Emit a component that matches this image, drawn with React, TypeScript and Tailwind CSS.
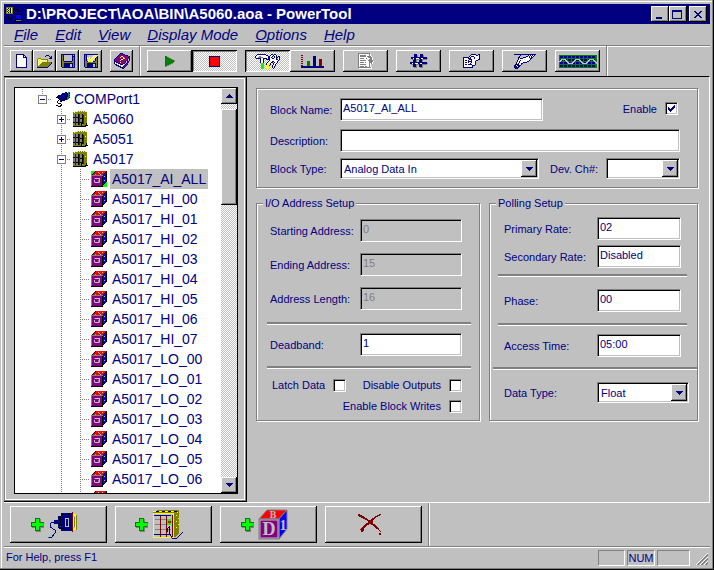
import { useState } from "react";
import type { ReactNode } from "react";
import clsx from "clsx";

const COLORS: Record<string, string> = {
  k: "#000000",
  n: "#000080",
  w: "#ffffff",
  g: "#808080",
  s: "#c0c0c0",
  y: "#ffff00",
  o: "#808000",
  r: "#ff0000",
  m: "#800000",
  p: "#800080",
  b: "#0000ff",
  l: "#00ff00",
  e: "#008000",
  t: "#008080",
};

const RAISED =
  "bg-[#c0c0c0] shadow-[inset_-1px_-1px_#000,inset_1px_1px_#fff,inset_-2px_-2px_#808080]";
const PRESSED =
  "bg-[repeating-conic-gradient(#fff_0_25%,#c0c0c0_0_50%)] bg-[length:2px_2px] shadow-[inset_1px_1px_#000,inset_-1px_-1px_#fff,inset_2px_2px_#808080]";
const SUNKEN =
  "border border-t-[#808080] border-l-[#808080] border-r-white border-b-white shadow-[inset_1px_1px_#000,inset_-1px_-1px_#c0c0c0]";
const ETCHED =
  "border border-[#808080] shadow-[1px_1px_#fff,inset_1px_1px_#fff]";

// One character per pixel, "." is transparent
function Pixels({ rows }: { rows: string[] }) {
  const width = Math.max(...rows.map((r) => r.length));
  return (
    <svg
      width={width}
      height={rows.length}
      shapeRendering="crispEdges"
      className="shrink-0"
      aria-hidden="true"
    >
      {rows.flatMap((row, y) =>
        [...row].map((c, x) =>
          COLORS[c] ? (
            <rect key={`${x}-${y}`} x={x} y={y} width={1} height={1} fill={COLORS[c]} />
          ) : null,
        ),
      )}
    </svg>
  );
}

const NEW_ICON = [
  "nnnnnnnn...",
  "nwwwwwwnn..",
  "nwwwwwwnwn.",
  "nwwwwwwnnnn",
  "nwwwwwwwwwn",
  "nwwwwwwwwwn",
  "nwwwwwwwwwn",
  "nwwwwwwwwwn",
  "nwwwwwwwwwn",
  "nwwwwwwwwwn",
  "nwwwwwwwwwn",
  "nwwwwwwwwwn",
  "nwwwwwwwwwn",
  "nnnnnnnnnnn",
];

const OPEN_ICON = [
  ".........nnn...",
  "........n...n.n",
  ".............nn",
  ".ooo........nnn",
  "oywyooooooo....",
  "owywywywywo....",
  "oywywywywyo....",
  "owywyooooooooon",
  "oywyoooooooooon",
  "owyoooooooooon.",
  "oyoooooooooon..",
  "ooooooooooon...",
  "nnnnnnnnnnn....",
];

const SAVE_ICON = [
  "nnnnnnnnnnnnnn",
  "nonssssssssnsn",
  "nonssssssssnnn",
  "nonssssssssnon",
  "nonssssssssnon",
  "nonssssssssnon",
  "nonssssssssnon",
  "noonnnnnnnnoon",
  "noooooooooooon",
  "noonnnnnnnnnon",
  "noonnnnnnssnon",
  "noonnnnnnssnon",
  "noonnnnnnssnon",
  ".nnnnnnnnnnnnn",
];

const SAVE_AS_ICON = [
  "nnnnnnnnnnnnnn",
  "nonssssssswyyw",
  "nonsssssswyywn",
  "nonyswsswyywnn",
  "nonwywswyywnon",
  "nonsyywyywsnon",
  "nonswyyywssnon",
  "noonyyyywnnoon",
  "noooooooooooon",
  "noonnnnnnnnnon",
  "noonnnnnnssnon",
  "noonnnnnnssnon",
  "noonnnnnnssnon",
  ".nnnnnnnnnnnnn",
];

const BOOK_ICON = [
  "......nnn.......",
  ".....npppnn.....",
  "....npppppppnn..",
  "...npppyyppppppn",
  "..npppyppyppppnn",
  ".npppppppyyppppn",
  "nppppppyyppppnsn",
  "npppppyppppppnsn",
  "nnpppppppppnsnn.",
  "nwnnppyppppnsnp.",
  "nwswnnpppnnsnp..",
  ".nnwswnnnwsnpn..",
  "..nnnwswwsnpn...",
  "....nnnwsnpn....",
  "......nnnpn.....",
  "........nn......",
];

const PLAY_ICON = [
  "ee........",
  "eeeg......",
  "eeeeeg....",
  "eeeeeeeg..",
  "eeeeeeeeeg",
  "eeeeeeeeeg",
  "eeeeeeeeg.",
  "eeeeeegg..",
  "eeeegg....",
  "eegg......",
  "gg........",
];

const LIST_ICON = [
  "gggggggggggg....",
  "gwwwwwwwwwwgw...",
  "gwggggggwwwgw...",
  "gwggggggwggggw..",
  "gwwwwwwwwwggggw.",
  "gwggggwwgwwwggw.",
  "gwwwwwwwwwwgggw.",
  "gwggggggwwggggg.",
  "gwwwwwwwwwwggggw",
  "gwggggwgwwwgggw.",
  "gwwwwwwwwwwgwgw.",
  "gwggggggwwwgw...",
  "gwwwwwwwwwwgw...",
  "gwggggwggwwgw...",
  "gggggggggggggw..",
  ".wwwwwwwwwwwww..",
];

const GRID_ICON = [
  "....nnn...nnn.....",
  "....nnng..nnng....",
  "....nnng..nnng....",
  ".nnnnnnnnnnnnnnnn.",
  ".nnwnnwwwnnwwnnnng",
  "..ggnnggggnnggggg.",
  "...nnng..nnng.....",
  "...nnng..nnng.....",
  "nnnnnnnnnnnnnnnnn.",
  "nnwnnwwwnnwwnnnnng",
  ".ggnnngggnnnggggg.",
  "...nnng..nnng.....",
  "...nnng..nnng.....",
  "....ggg...ggg.....",
];

const PROPERTIES_ICON = [
  "........nnnnn..nn",
  ".......nwwwwwnnwn",
  "......nwnnnwwwwwn",
  "nnnnnnwnwwwnwwwwn",
  "nwwwwnnnwwwnwwwwn",
  "nwwwwwnnnwwwwwwnn",
  "nwnnwnwwnwwwwnn..",
  "nwwwwnnnnwwwn....",
  "nwnnwnwwnwwwn....",
  "nwwwwwwnwwwwn....",
  "nwnnwnnnnwwwn....",
  "nwwwwwwwwnnn.....",
  "nwwwwwwwwn.......",
  "nnnnnnnnnn.......",
];

const HAND_ICON = [
  "nnnnnnnnnnnnnnnnnnnnnn",
  "......n.......nwnwnwn.",
  ".....n......nnwnwnwn..",
  "....nn...nnnwwwnwnn...",
  "....nwnnnwwwwwwwnn....",
  "....nwwwwwwwwwwwn.....",
  "...nwwnwwwwwwwwn......",
  "...nwnwwwwwwwnn.......",
  "..nwwnwwwnnnn.........",
  "..nwnwwnn.............",
  ".nnnnwwn..............",
  "nnwnnnn...............",
  "nnnwnn................",
  "nnnnn.................",
  ".nnn..................",
];

const TOOLS_ICON = [
  "..nnnnnnnnn.....nn.nn....",
  ".nwwwwwwwwwnn..nwwnwwn...",
  "nwwwggwwwwwwwnnwwn.nwn.nn",
  "nwwgggggwwwwwnnwn..nwnnwn",
  ".nnnnnwwnnnnwnnwwnnwwn.wn",
  ".....nwwn..nnnnwwwwwwnnwn",
  ".....nwwn.....nwwwwwwwwn.",
  ".....nwwn....nwwwnnwwwn..",
  ".....nwwn...nwwwnn.nwwn..",
  "......lll..nyywn..nwwn...",
  "......lll..nyyyn..nwn....",
  "......lll..yyyn..nwwn....",
  "......lll..yyy...nwn.....",
  "......lll..yyy...nwn.....",
  "......lll..yyy....n......",
];

const CHART_ICON = [
  "mm.....................",
  "............nnn........",
  "mm..........nnn........",
  "............nnn........",
  "mm..........nnn...mmm..",
  "............nnn...mmm..",
  "mm....eee...nnn...mmm..",
  "......eee...nnn...mmm..",
  "mm....eee...nnn...mmm..",
  "......eee...nnn...mmm..",
  "mm....eee...nnn...mmm..",
  "nnnnnnnnnnnnnnnnnnnnnnn",
  "nnnnnnnnnnnnnnnnnnnnnnn",
];

const PORT_ICON = [
  ".........kk.tt",
  "......nnnnnktk",
  ".....nnnnnnktt",
  "..kknnbnnnnktk",
  ".knnnnnbnnnktt",
  "kknnnnnnnnkttk",
  "..knnnnnnnktt.",
  "...nnnnnnkkt..",
  "..k.nnnkk.....",
  ".k..kk........",
  ".k............",
  "..kkk.........",
  ".....k........",
  "kk..kk........",
  "..kkk.........",
];

const DEVICE_ICON = [
  "..y.yoyoyoyoy..",
  "oyoooooooooooo.",
  "oogooogooooooo.",
  "ogmggkmggkoooo.",
  "ogmggkmggkmooo.",
  "ogmggkmggkmoyo.",
  "kkmkkkmggkmooo.",
  "ogmggkmkkkmooo.",
  "ogmggkmggkmooo.",
  "ogmggkmggkmooo.",
  "ogmggkmggkmooo.",
  "kkmkkkmkkkmooo.",
  "ogmggkmgkkmook.",
  "ogmggkmgkgoook.",
  "ooooooookoookkk",
  "kkkkkkkkkkkkk..",
];

const BLOCK_ICON = [
  "....krrrrrrrrrrk",
  "...krrrsrrrsrrkk",
  "..krrrrrsrrrrkbk",
  ".krrsrrrrsrrkbbk",
  "ggggggggggggbbbk",
  "gppppppppppkbsbk",
  "gppppppppppkbbbk",
  "gppgsssssppkbbbk",
  "gpppppppsppkbbbk",
  "gppspppgsppkbsbk",
  "gppspppgsppkbbbk",
  "gppgssssgppkbbk.",
  "gppppppppppkbk..",
  "gppppppppppkk...",
  "gppppppppppk....",
  "kkkkkkkkkkkk....",
];

const ACTIVE_BLOCK_ICON = BLOCK_ICON.map((row) => row.replace(/\./g, "l"));

const PLUS_ICON = [
  "....eeeee....",
  "....ellleg...",
  "....ellleg...",
  "....ellleg...",
  "eeeeellleeeee",
  "elllllllllllg",
  "elllllllllllg",
  "elllllllllllg",
  "eeeeellleeeeg",
  ".gggelllegggg",
  "....ellleg...",
  "....ellleg...",
  "....eeeeeg...",
  ".....ggggg...",
];

const APP_ICON = [
  "ooooooo.........",
  "oykykyo..k......",
  "okyokyo.kkkk....",
  "oykykyo..k..k...",
  "okyokyo.....k...",
  "oykykyo.........",
  "ooooooo.........",
  ".........kkkkkkk",
  ".........kbbbbbk",
  "..k......kbbbbbk",
  "..k......kbbbbbk",
  "..kkk....kbbbbbk",
  "....k....kkkkkkk",
  "..........ggggg.",
  "........kkkkkkkk",
];

const DELETE_ICON = [
  "mm...................mm",
  "mmmm...............mmm.",
  ".mmmmm...........mmm...",
  "...mmmm.........mm.....",
  ".....mmmm.....mmm......",
  ".......mmm...mmm.......",
  ".........mmmmmm........",
  "..........mmmmm........",
  "..........mmmmm........",
  "........mmmmmmm........",
  ".......mmmm..mmmm......",
  "......mmm......mmm.....",
  ".....mmm........mmm....",
  "....mmm..........mmm...",
  "...mmm............mmm..",
  "..mmmm..............m..",
  "...mmm...............m.",
  "...mm.................m",
  ".......................",
  ".....................mm",
  ".....................mm",
];

function StopIcon() {
  return (
    <svg width="11" height="11" shapeRendering="crispEdges" aria-hidden="true">
      <rect width="11" height="11" fill="#000080" />
      <rect x="1" y="1" width="9" height="9" fill="#f00" />
    </svg>
  );
}

function WaveIcon() {
  return (
    <svg width="38" height="13" shapeRendering="crispEdges" aria-hidden="true">
      <rect width="38" height="13" fill="#008000" />
      <g fill="#000080">
        {[1, 4, 7, 10].map((y) =>
          [1, 5, 9, 13, 17, 21, 25, 29, 33].map((x) => (
            <rect key={`${x}-${y}`} x={x} y={y} width="3" height="2" />
          )),
        )}
      </g>
      <path
        d="M0 6.5h1l2-2h3l2 2 2 2h3l2-2 2-2h3l2 2 2 2h3l2-2 2-2h3l2 2 2 2"
        fill="none"
        stroke="#c0c0c0"
        strokeWidth="1"
      />
    </svg>
  );
}

function SerialPortIcon() {
  return (
    <svg width="30" height="28" shapeRendering="crispEdges" aria-hidden="true">
      <path
        d="M8 11H4l-2 2v3l5 3v3l-3 4H1"
        fill="none"
        stroke="#000080"
        strokeWidth="1"
      />
      <path d="M6 9h4V5h3V2h11v18H13v-3h-3v-4H6z" fill="#000080" />
      <path d="M11 5h2v13h-2z" fill="#000" />
      <rect x="17" y="7" width="3" height="8" fill="none" stroke="#c0c0c0" />
      <path d="M24 1h1v20h-1z" fill="#800000" />
      <path d="M25 3h3v2h-3zM27 5h1v12h-1zM25 17h3v2h-3z" fill="#ffff00" />
      <path d="M25 6h1v10h-1z" fill="#fff" />
      <path d="M26 6h1v10h-1zM28 4h1v15h-1z" fill="#808000" />
      <path d="M14 3h2v1h-2zM14 17h2v1h-2zM20 2h1v2h-1z" fill="#000" />
      <path d="M12 15h1v1h-1zM0 26h1v1H0z" fill="#008080" />
    </svg>
  );
}

function RackIcon() {
  return (
    <svg width="32" height="30" shapeRendering="crispEdges" aria-hidden="true">
      <path d="M1 2l5-2h21v23l-4 4H1z" fill="#808000" />
      <path d="M1 1h3v1H1zM7 1h3v1H7zM13 1h3v1h-3zM19 1h3v1h-3z" fill="#ffff00" />
      <path d="M4 1h3v1H4zM10 1h3v1h-3zM16 1h3v1h-3zM22 1h3v1h-3z" fill="#000" />
      <rect x="1" y="3" width="20" height="24" fill="#c0c0c0" />
      <path d="M1 3h20v24H1z" fill="none" stroke="#ffff00" strokeWidth="1" />
      <path d="M3 9h16M3 14h16M3 19h16" stroke="#808080" />
      <path d="M8 5v22M14 5v22M20 5v22" stroke="#800000" />
      <path d="M2 5.5h17M2 24h17" stroke="#000080" />
      <rect x="15" y="9" width="4" height="6" fill="#00ff00" />
      <path d="M16 11h3v2h-3z" fill="#f00" />
      <path
        d="M24 5h1v1h-1zM26 8h1v1h-1zM24 11h1v1h-1zM26 14h1v1h-1zM24 17h1v1h-1zM25 2h1v1h-1z"
        fill="#ffff00"
      />
      <path d="M15 22v-3l2-2v6l3 5h5l6-6" fill="none" stroke="#000080" />
    </svg>
  );
}

function BigBlockIcon() {
  return (
    <svg width="31" height="31" aria-hidden="true">
      <path d="M1 10L9 1h20l-8 9z" fill="#f00" stroke="#808080" />
      <path d="M21 10l8-9v19l-8 10z" fill="#00f" stroke="#808080" />
      <rect x="1" y="10" width="20" height="20" fill="#800080" stroke="#808080" />
      <rect x="2" y="11" width="18" height="18" fill="none" stroke="#c0c0c0" />
      <text
        x="11"
        y="26"
        textAnchor="middle"
        fill="#c0c0c0"
        className="font-['Liberation_Serif',serif] text-[18px] font-bold"
      >
        D
      </text>
      <text
        x="15"
        y="9"
        textAnchor="middle"
        fill="#c0c0c0"
        className="font-['Liberation_Serif',serif] text-[10px] font-bold"
      >
        B
      </text>
      <text
        x="25"
        y="21"
        textAnchor="middle"
        fill="#c0c0c0"
        className="font-['Liberation_Serif',serif] text-[14px] font-bold"
      >
        1
      </text>
    </svg>
  );
}

function ToolButton({
  label,
  small,
  pressed,
  disabled,
  onClick,
  children,
}: {
  label: string;
  small?: boolean;
  pressed?: boolean;
  disabled?: boolean;
  onClick?: () => void;
  children: ReactNode;
}) {
  return (
    <button
      type="button"
      aria-label={label}
      aria-pressed={pressed}
      disabled={disabled}
      onClick={onClick}
      className={clsx(
        "flex h-[22px] shrink-0 items-center justify-center",
        small ? "w-[23px]" : "w-[45px]",
        pressed ? PRESSED : RAISED,
      )}
    >
      {children}
    </button>
  );
}

function Divider() {
  return <div className="mx-1.5 w-0.5 self-stretch border-l border-[#808080] bg-white" />;
}

function TitleBar() {
  return (
    <header className="flex h-5 shrink-0 items-center bg-[#000080] pr-[3px] pl-0.5 text-white">
      <Pixels rows={APP_ICON} />
      <h1 className="ml-1 flex-1 truncate text-[15px] leading-5 font-bold">
        D:\PROJECT\AOA\BIN\A5060.aoa - PowerTool
      </h1>
      <button aria-label="Minimize" className={clsx("flex h-4 w-[18px] items-end pb-[3px] pl-[5px]", RAISED)}>
        <span className="h-0.5 w-1.5 bg-[#000080]" />
      </button>
      <button aria-label="Maximize" className={clsx("flex h-4 w-[18px] items-center pl-[3px]", RAISED)}>
        <span className="h-[9px] w-2.5 border border-t-2 border-[#000080]" />
      </button>
      <button
        aria-label="Close"
        className={clsx("ml-0.5 flex h-4 w-[18px] items-center justify-center", RAISED)}
      >
        <Pixels
          rows={["nn....nn", ".nn..nn.", "..nnnn..", "...nn...", "..nnnn..", ".nn..nn.", "nn....nn"]}
        />
      </button>
    </header>
  );
}

const MENUS = ["File", "Edit", "View", "Display Mode", "Options", "Help"];

function MenuBar() {
  return (
    <nav className="flex h-[21px] shrink-0 gap-[17px] pl-2.5 text-[15px] leading-5 italic">
      {MENUS.map((name) => (
        <button key={name} type="button">
          <span className="underline">{name[0]}</span>
          {name.slice(1)}
        </button>
      ))}
    </nav>
  );
}

function Toolbar() {
  const [running, setRunning] = useState(false);
  const [view, setView] = useState("config");

  return (
    <div className="flex shrink-0 items-center border-t border-[#808080] pl-1.5 shadow-[inset_0_1px_#fff]">
      <div className="flex py-1">
        <ToolButton small label="New">
          <Pixels rows={NEW_ICON} />
        </ToolButton>
        <ToolButton small label="Open">
          <Pixels rows={OPEN_ICON} />
        </ToolButton>
        <ToolButton small label="Save">
          <Pixels rows={SAVE_ICON} />
        </ToolButton>
        <ToolButton small label="Save As">
          <Pixels rows={SAVE_AS_ICON} />
        </ToolButton>
      </div>
      <div className="ml-2 flex">
        <ToolButton small label="Help Topics">
          <Pixels rows={BOOK_ICON} />
        </ToolButton>
      </div>
      <Divider />
      <div className="flex gap-2">
        <div className="flex">
          <ToolButton label="Run" pressed={running} onClick={() => setRunning(true)}>
            <Pixels rows={PLAY_ICON} />
          </ToolButton>
          <ToolButton label="Stop" pressed={!running} onClick={() => setRunning(false)}>
            <StopIcon />
          </ToolButton>
        </div>
        <div className="flex">
          <ToolButton
            label="Configuration"
            pressed={view === "config"}
            onClick={() => setView("config")}
          >
            <Pixels rows={TOOLS_ICON} />
          </ToolButton>
          <ToolButton
            label="Statistics"
            pressed={view === "stats"}
            onClick={() => setView("stats")}
          >
            <Pixels rows={CHART_ICON} />
          </ToolButton>
        </div>
        <ToolButton label="List" disabled>
          <Pixels rows={LIST_ICON} />
        </ToolButton>
        <ToolButton label="Grid">
          <Pixels rows={GRID_ICON} />
        </ToolButton>
        <ToolButton label="Properties">
          <Pixels rows={PROPERTIES_ICON} />
        </ToolButton>
        <ToolButton label="Write">
          <Pixels rows={HAND_ICON} />
        </ToolButton>
        <ToolButton label="Monitor">
          <WaveIcon />
        </ToolButton>
      </div>
      <Divider />
    </div>
  );
}

// Dotted connector cell, optionally with a +/- box on the line
function Branch({
  up = true,
  down = true,
  across = true,
  box,
}: {
  up?: boolean;
  down?: boolean;
  across?: boolean;
  box?: "+" | "-";
}) {
  return (
    <svg width="19" height="20" shapeRendering="crispEdges" className="shrink-0" aria-hidden="true">
      <g stroke="#808080" strokeDasharray="1 1">
        {up && <path d="M9.5 0v10" />}
        {down && <path d="M9.5 10v10" />}
        {across && <path d="M9 10.5h10" />}
      </g>
      {box && (
        <g>
          <rect x="5.5" y="6.5" width="8" height="8" fill="#fff" stroke="#808080" />
          <path d="M7 10.5h5" stroke="#000080" />
          {box === "+" && <path d="M9.5 8v5" stroke="#000080" />}
        </g>
      )}
    </svg>
  );
}

const DEVICES = [
  { name: "A5060", open: false },
  { name: "A5051", open: false },
  { name: "A5017", open: true },
];

const BLOCKS = [
  "A5017_AI_ALL",
  ...[0, 1, 2, 3, 4, 5, 6, 7].map((n) => `A5017_HI_0${n}`),
  ...[0, 1, 2, 3, 4, 5, 6].map((n) => `A5017_LO_0${n}`),
];

function ProjectTree() {
  const [selected, setSelected] = useState("A5017_AI_ALL");

  return (
    <div className="flex min-h-0 flex-1 border border-black bg-white">
      <ul className="min-w-0 flex-1 overflow-hidden pt-px pl-[18px] text-[14px] leading-5">
        <li className="flex h-5 items-center">
          <button type="button" aria-label="Collapse COMPort1">
            <Branch box="-" down={false} />
          </button>
          <span className="flex w-[22px] justify-center">
            <Pixels rows={PORT_ICON} />
          </span>
          COMPort1
        </li>
        {DEVICES.map((device) => (
          <li key={device.name} className="flex h-5 items-center pl-[19px]">
            <button type="button" aria-label={`Toggle ${device.name}`}>
              <Branch box={device.open ? "-" : "+"} />
            </button>
            <span className="flex w-[22px] pl-0.5">
              <Pixels rows={DEVICE_ICON} />
            </span>
            {device.name}
          </li>
        ))}
        {BLOCKS.map((block) => (
          <li key={block} className="flex h-5 items-center pl-[19px]">
            <Branch across={false} />
            <Branch />
            <button
              type="button"
              className="flex items-center gap-[3px] pl-px"
              onClick={() => setSelected(block)}
            >
              <Pixels rows={selected === block ? ACTIVE_BLOCK_ICON : BLOCK_ICON} />
              <span className={clsx("px-0.5", selected === block && "bg-[#c0c0c0]")}>{block}</span>
            </button>
          </li>
        ))}
        {/* next entry, below the fold */}
        <li className="flex h-5 items-center pl-[19px]" aria-hidden="true">
          <Branch across={false} />
          <Branch />
          <span className="pl-px">
            <Pixels rows={BLOCK_ICON} />
          </span>
        </li>
      </ul>
      <div className="flex w-4 flex-col bg-[repeating-conic-gradient(#fff_0_25%,#c0c0c0_0_50%)] bg-[length:2px_2px]">
        <button
          type="button"
          aria-label="Scroll up"
          className={clsx("flex h-4 shrink-0 items-center justify-center", RAISED)}
        >
          <Pixels rows={["...n...", "..nnn..", ".nnnnn.", "nnnnnnn"]} />
        </button>
        <div className={clsx("mt-[5px] h-24 shrink-0", RAISED)} />
        <button
          type="button"
          aria-label="Scroll down"
          className={clsx("mt-auto flex h-4 shrink-0 items-center justify-center", RAISED)}
        >
          <Pixels rows={["nnnnnnn", ".nnnnn.", "..nnn..", "...n..."]} />
        </button>
      </div>
    </div>
  );
}

function TextField({
  id,
  value,
  disabled,
  className,
}: {
  id: string;
  value: string;
  disabled?: boolean;
  className?: string;
}) {
  return (
    <input
      id={id}
      type="text"
      defaultValue={value}
      disabled={disabled}
      className={clsx(
        "h-[23px] px-0.5 pb-1 outline-none",
        SUNKEN,
        disabled ? "bg-[#c0c0c0] text-[#808080]" : "bg-white",
        className,
      )}
    />
  );
}

function SelectField({
  id,
  options,
  className,
}: {
  id: string;
  options: string[];
  className?: string;
}) {
  return (
    <div className={clsx("relative h-[21px]", className)}>
      <select
        id={id}
        className={clsx("h-full w-full appearance-none bg-white pr-5 pl-[3px] outline-none", SUNKEN)}
      >
        {options.map((option) => (
          <option key={option}>{option}</option>
        ))}
      </select>
      <span
        className={clsx(
          "pointer-events-none absolute top-0.5 right-0.5 bottom-0.5 flex w-4 items-center justify-center",
          RAISED,
        )}
      >
        <Pixels rows={["nnnnnnn", ".nnnnn.", "..nnn..", "...n..."]} />
      </span>
    </div>
  );
}

function CheckField({ label, checked }: { label: string; checked?: boolean }) {
  return (
    <label className="flex items-center gap-2 whitespace-nowrap">
      {label}
      <span className="relative flex size-[13px]">
        <input
          type="checkbox"
          defaultChecked={checked}
          className={clsx("peer size-[13px] appearance-none bg-white", SUNKEN)}
        />
        <span className="pointer-events-none absolute inset-0 hidden items-center justify-center peer-checked:flex">
          <Pixels
            rows={["......n", ".....nn", "n...nnn", "nn.nnn.", "nnnnn..", ".nnn...", "..n...."]}
          />
        </span>
      </span>
    </label>
  );
}

function Rule() {
  return <div className="h-[3px] border-b border-white bg-[#808080]" />;
}

function AddressRow({
  id,
  label,
  value,
  disabled,
}: {
  id: string;
  label: string;
  value: string;
  disabled?: boolean;
}) {
  return (
    <div className="flex items-center justify-between pr-[17px] pl-[13px]">
      <label htmlFor={id}>{label}</label>
      <TextField id={id} value={value} disabled={disabled} className="w-[102px]" />
    </div>
  );
}

function PollingRow({ id, label, value }: { id: string; label: string; value: string }) {
  return (
    <div className="flex items-center justify-between pr-4 pl-3.5">
      <label htmlFor={id}>{label}</label>
      <TextField id={id} value={value} className="w-[84px]" />
    </div>
  );
}

function BlockForm() {
  return (
    <form className="flex flex-col gap-[7px] text-[11px] leading-4">
      <section className={clsx("flex flex-col pt-[9px] pr-[17px] pb-2 pl-[13px]", ETCHED)}>
        <div className="flex items-center">
          <label htmlFor="block-name" className="w-[70px]">
            Block Name:
          </label>
          <TextField id="block-name" value="A5017_AI_ALL" className="w-[203px]" />
          <div className="mr-0.5 mb-0.5 ml-auto">
            <CheckField label="Enable" checked />
          </div>
        </div>
        <div className="mt-2 flex items-center">
          <label htmlFor="description" className="w-[70px]">
            Description:
          </label>
          <TextField id="description" value="" className="min-w-0 flex-1" />
        </div>
        <div className="mt-1.5 flex items-center">
          <label htmlFor="block-type" className="w-[70px]">
            Block Type:
          </label>
          <SelectField
            id="block-type"
            className="w-[199px]"
            options={["Analog Data In", "Analog Data Out", "Digital Data In", "Digital Data Out"]}
          />
          <label htmlFor="channel" className="ml-[11px]">
            Dev. Ch#:
          </label>
          <SelectField id="channel" className="ml-auto w-[74px]" options={["", "0", "1", "2", "3"]} />
        </div>
      </section>

      <div className="flex gap-[9px]">
        <fieldset className={clsx("min-w-0 flex-1 pb-1.5", ETCHED)}>
          <legend className="ml-1.5 bg-[#c0c0c0] px-0.5">I/O Address Setup</legend>
          <div className="flex flex-col gap-[11px] pt-2">
            <AddressRow id="start" label="Starting Address:" value="0" disabled />
            <AddressRow id="end" label="Ending Address:" value="15" disabled />
            <AddressRow id="length" label="Address Length:" value="16" disabled />
          </div>
          <div className="mt-3 mr-2 ml-2.5">
            <Rule />
          </div>
          <div className="pt-2 pb-2.5">
            <AddressRow id="deadband" label="Deadband:" value="1" />
          </div>
          <div className="mr-2 ml-2.5">
            <Rule />
          </div>
          <div className="flex flex-col items-end gap-[5px] pt-2 pr-[17px] pl-[15px]">
            <div className="flex w-full justify-between">
              <CheckField label="Latch Data" />
              <CheckField label="Disable Outputs" />
            </div>
            <CheckField label="Enable Block Writes" />
          </div>
        </fieldset>

        <fieldset className={clsx("w-[209px]", ETCHED)}>
          <legend className="ml-1.5 bg-[#c0c0c0] px-0.5">Polling Setup</legend>
          <div className="flex flex-col gap-[5px] pt-1.5 pb-1.5">
            <PollingRow id="primary" label="Primary Rate:" value="02" />
            <PollingRow id="secondary" label="Secondary Rate:" value="Disabled" />
          </div>
          <div className="mr-2.5 ml-2">
            <Rule />
          </div>
          <div className="pt-3 pb-[11px]">
            <PollingRow id="phase" label="Phase:" value="00" />
          </div>
          <div className="mr-2.5 ml-2">
            <Rule />
          </div>
          <div className="pt-2 pb-2.5">
            <PollingRow id="access" label="Access Time:" value="05:00" />
          </div>
          <div className="ml-[3px]">
            <Rule />
          </div>
          <div className="flex items-center justify-between pt-3 pr-2 pl-3.5">
            <label htmlFor="data-type">Data Type:</label>
            <SelectField
              id="data-type"
              className="w-[92px]"
              options={["Float", "Integer", "Long", "Double"]}
            />
          </div>
        </fieldset>
      </div>
    </form>
  );
}

function ActionButton({ label, children }: { label: string; children: ReactNode }) {
  return (
    <button
      type="button"
      aria-label={label}
      className={clsx("flex h-[37px] w-[97px] items-center justify-center gap-1 pr-2", RAISED)}
    >
      {children}
    </button>
  );
}

function ActionBar() {
  return (
    <div className="flex shrink-0 items-center border-t border-white pl-1.5 shadow-[0_1px_#808080,0_2px_#fff]">
      <div className="flex gap-2 py-[3px]">
        <ActionButton label="Add port">
          <Pixels rows={PLUS_ICON} />
          <SerialPortIcon />
        </ActionButton>
        <ActionButton label="Add device">
          <Pixels rows={PLUS_ICON} />
          <RackIcon />
        </ActionButton>
        <ActionButton label="Add block">
          <Pixels rows={PLUS_ICON} />
          <BigBlockIcon />
        </ActionButton>
        <ActionButton label="Delete">
          <Pixels rows={DELETE_ICON} />
        </ActionButton>
      </div>
      <Divider />
    </div>
  );
}

function StatusBar() {
  const cell =
    "h-4 border border-t-[#808080] border-l-[#808080] border-r-white border-b-white text-center";
  return (
    <footer className="mt-1 flex shrink-0 gap-0.5 pl-0.5 text-[11px] leading-[15px]">
      <p className="flex-1">For Help, press F1</p>
      <span className={clsx("w-[27px]", cell)} />
      <span className={clsx("w-7", cell)}>NUM</span>
      <span className={clsx("w-[33px]", cell)} />
      <svg width="16" height="16" className="ml-0.5" aria-hidden="true">
        <path d="M2 15L14 3M6 15l8-8M10 15l4-4" stroke="#fff" />
        <path d="M3 15L14 4M4 15L14 5M7 15l7-7M8 15l6-6M11 15l3-3M12 15l2-2" stroke="#808080" />
      </svg>
    </footer>
  );
}

export default function App() {
  return (
    <div className="flex h-screen flex-col overflow-hidden bg-[#c0c0c0] p-1 font-['Liberation_Sans',Arial,sans-serif] text-[#000080] shadow-[inset_-1px_-1px_#000,inset_-2px_-2px_#808080,inset_1px_1px_#c0c0c0,inset_2px_2px_#fff]">
      <TitleBar />
      <MenuBar />
      <Toolbar />
      <main className="flex min-h-0 flex-1">
        <aside className="flex w-[243px] shrink-0 flex-col border-t border-r border-b border-black p-[10px] pr-2 pb-[7px] shadow-[inset_-1px_-1px_#808080,inset_1px_1px_#808080,inset_2px_2px_#fff,inset_-2px_-2px_#fff]">
          <ProjectTree />
        </aside>
        <div className="min-w-0 flex-1 border-t border-r border-r-white border-t-black pt-[11px] pr-[11px] pb-2 pl-[9px]">
          <BlockForm />
        </div>
      </main>
      <ActionBar />
      <StatusBar />
    </div>
  );
}
